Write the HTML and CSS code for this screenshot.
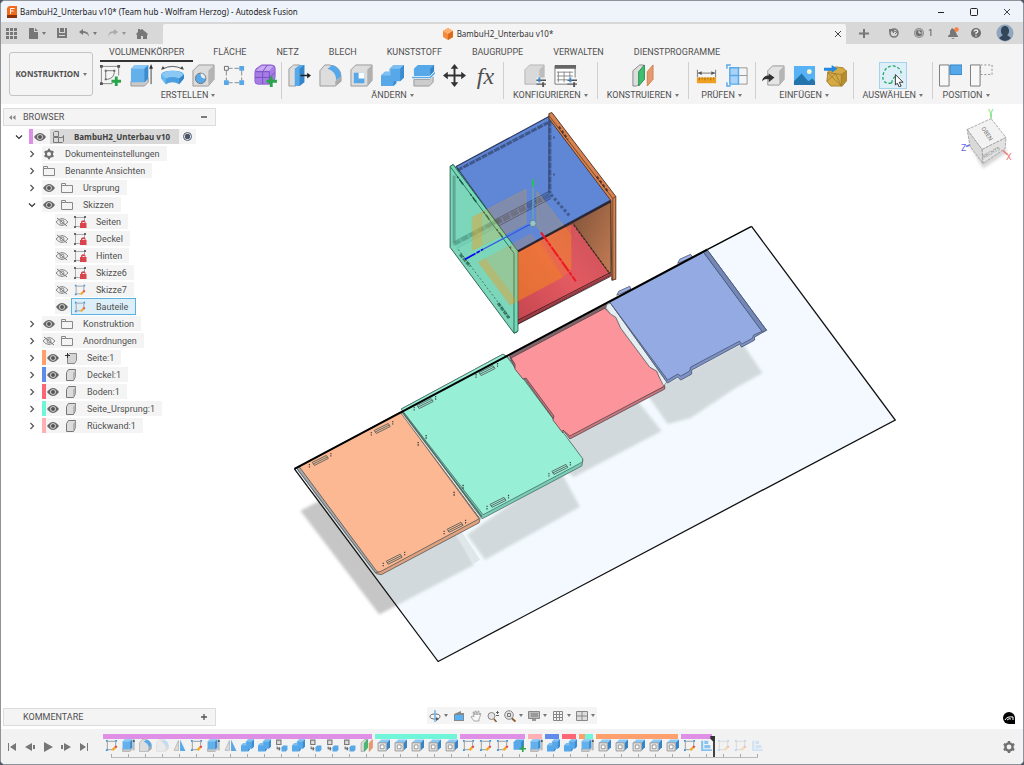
FILE: index.html
```html
<!doctype html>
<html lang="de">
  <head>
    <meta charset="UTF-8" />
    <meta name="viewport" content="width=device-width, initial-scale=1.0" />
    <title>BambuH2_Unterbau v10* - Autodesk Fusion</title>
    <link rel="stylesheet" href="styles.css">
  </head>
  <body>
    <!-- icon set -->
    <svg class="sprite" aria-hidden="true">
      <symbol id="i-grid" viewBox="0 0 12 12"><path fill="#777" d="M1 1h3v3H1zM5 1h3v3H5zM9 1h3v3H9zM1 5h3v3H1zM5 5h3v3H5zM9 5h3v3H9zM1 9h3v3H1zM5 9h3v3H5zM9 9h3v3H9z"/></symbol>
      <symbol id="i-file" viewBox="0 0 12 12"><path fill="#777" d="M2 1h5v4h4v7H2zM8 1l3 3H8z"/></symbol>
      <symbol id="i-save" viewBox="0 0 12 12"><path fill="#777" d="M1 1h10v10H1z"/><path fill="#d8d8d8" d="M3 1h1v4h4V1h1v5H3zM3 8h6v1H3z"/></symbol>
      <symbol id="i-undo" viewBox="0 0 12 12"><path fill="#777" d="M1 5l4-3v2q6 0 6 6-1-4-6-4v2z"/></symbol>
      <symbol id="i-redo" viewBox="0 0 12 12"><path fill="#999" d="M11 5L7 2v2Q1 4 1 10q1-4 6-4v2z"/></symbol>
      <symbol id="i-home" viewBox="0 0 12 12"><path fill="#777" d="M6 2l6 5-1 1v4H7V9H5v3H1V8L0 7l2-2V2h2v1z"/></symbol>
      <symbol id="i-x" viewBox="0 0 12 12"><path stroke="#444" d="M3 3l6 6M9 3l-6 6"/></symbol>
      <symbol id="i-plus" viewBox="0 0 12 12"><path stroke="#777" stroke-width="2" d="M6 2v9M1 6.500h10"/></symbol>
      <symbol id="i-ext" viewBox="0 0 12 12"><circle cx="6" cy="6" r="4" fill="none" stroke="#777" stroke-width="1.600"/><path fill="#777" d="M1 2h5v4H5L4 4 1 5z"/><path fill="none" stroke="#777" d="M6 4l3 1-2 2"/></symbol>
      <symbol id="i-clock" viewBox="0 0 12 12"><circle cx="6" cy="6" r="5" fill="#888"/><circle cx="6" cy="6" r="3.800" fill="#6e6e6e" stroke="#ccc" stroke-width=".8"/><path fill="none" stroke="#eee" d="M6 3.500V6h2.500"/></symbol>
      <symbol id="i-bell" viewBox="0 0 12 12"><path fill="#777" d="M5 1l3 2 2 5 1 1v1H1V9l2-2V4zM4 11h4l-2 1z"/><circle cx="9.500" cy="2.500" r="2.200" fill="#ff7f3f"/></symbol>
      <symbol id="i-help" viewBox="0 0 12 12"><circle cx="6" cy="6" r="5" fill="#6e6e6e"/><path fill="none" stroke="#eee" stroke-width="1.300" d="M4.200 4.500q0-1.500 1.800-1.500t1.800 1.500Q7.800 5.500 6 6v1.200M6 8.200v1.200"/></symbol>
      <symbol id="i-avatar" viewBox="0 0 18 18"><circle cx="9" cy="9" r="8.500" fill="#8fa6be"/><path fill="#33465a" d="M9 2c5 0 5 8 2 9l4 3q-6 6-12 0l4-3C4 10 4 2 9 2z"/></symbol>

      <!-- modelling tools -->
      <symbol id="i-sketchnew" viewBox="0 0 24 24"><path fill="none" stroke="#888" d="M2 2.500h18M2.500 3v18M2 20.500h12M20.500 3v9"/><path fill="#555" d="M1 1h3v3H1zM19 1h3v3h-3zM1 19h3v3H1z"/><path fill="none" stroke="#777" d="M7 7h9v2q-1 6-7 7H7z"/><path fill="#666" d="M6 6h2v2H6zM15 6h2v2h-2zM6 15h2v2H6z"/><path stroke="#2aa54a" stroke-width="3" d="M18 13v10M13 18h10"/></symbol>
      <symbol id="i-extrude" viewBox="0 0 24 24"><path fill="#c9c9c9" stroke="#999" d="M1 18h14l4-3v4l-4 4H1z"/><path fill="#63b0ea" d="M1 5l4-4h14v14l-4 4H1z"/><path fill="#8bc8f5" d="M1 5l4-4h14l-4 4z"/><path fill="#3d8cd0" d="M15 5l4-4v14l-4 4z"/><path stroke="#444" d="M22 3v18"/><path fill="#333" d="M22 0l2 5h-4z"/></symbol>
      <symbol id="i-revolve" viewBox="0 0 24 24"><path fill="#4d9fe0" d="M0 11q1-4 12-4t12 4v3l-5 7q-7-4-14 0l-5-7z"/><path fill="#8bc8f5" d="M0 11q4-4 12-4t12 4l-5 4q-7-3-14 0z"/><path fill="#3585c8" d="M19 15l5-4v4l-5 6z"/><path fill="#6bb8f0" d="M0 11l5 4v6l-5-6z"/><path fill="none" stroke="#555" d="M2 5q10-5 20 0"/><path fill="#444" d="M0 6l2-4 2 3zM24 6l-2-4-2 3z"/></symbol>
      <symbol id="i-hole" viewBox="0 0 24 24"><path fill="#dcdcdc" stroke="#999" d="M1 7l6-6h16v15l-6 7H1z"/><path fill="#b4b4b4" d="M17 7l6-6v15l-6 6z"/><circle cx="9" cy="15" r="5.500" fill="#57a8e8" stroke="#777"/><path fill="#eee" d="M9 10a5 5 0 0 1 5 5q-5 1-5-5z"/></symbol>
      <symbol id="i-pattern" viewBox="0 0 24 24"><path stroke="#888" stroke-dasharray="5 2" d="M5 4.500h14M5 19.500h14M3.500 7v10M19.500 7v10" fill="none"/><path fill="#fff" stroke="#666" d="M1.500 2.500h4v4h-4z"/><path fill="#57a8e8" d="M17 2h5v5h-5zM1 17h5v5H1zM17 17h5v5h-5z"/></symbol>
      <symbol id="i-form" viewBox="0 0 24 24"><path fill="#a67de6" stroke="#8a5fcc" d="M1 8q0-3 4-5l3-2h10q4 0 4 3v10q0 3-3 5l-3 2H4q-3 0-3-3z"/><path fill="#c8abf5" d="M2 7l6-5h12l-4 5z"/><path stroke="#7a4fc0" fill="none" d="M2 8h14v13M9 8v13M1 14h15l6-5M9 8l5-7"/><path stroke="#2aa54a" stroke-width="3" d="M18 13v11M13 18h11"/></symbol>
      <symbol id="i-press" viewBox="0 0 24 24"><path fill="#ddd" stroke="#999" d="M1 5l5-4h6v18l-4 4H1z"/><path fill="#57a8e8" d="M7 5l5-4h5v18l-5 4H7z"/><path fill="#3585c8" d="M12 5l5-4v18l-5 4z"/><path stroke="#222" stroke-width="1.500" d="M13 12h8"/><path fill="#222" d="M20 9l4 3-4 3z"/></symbol>
      <symbol id="i-fillet" viewBox="0 0 24 24"><path fill="#ddd" stroke="#999" d="M1 7l5-6h5q12 2 12 12v5l-6 5H1z"/><path fill="#57a8e8" d="M9 5l5-4q9 3 9 12l-5 4q0-9-9-12z"/><path fill="#aaa" d="M17 18l6-5v5l-6 5z"/></symbol>
      <symbol id="i-shell" viewBox="0 0 24 24"><path fill="#ddd" stroke="#999" d="M1 6l5-5h17v16l-5 6H1z"/><path fill="#b0b0b0" d="M18 6l5-5v16l-5 6z"/><path fill="#57a8e8" d="M4 9h11v11H4z"/><path fill="#fff" d="M9 9h6v6H9z"/></symbol>
      <symbol id="i-combine" viewBox="0 0 24 24"><path fill="#57a8e8" d="M0 12l4-4h5V5l4-4h11v13l-4 4h-4v2l-3 3H0z"/><path fill="#7fc0f2" d="M0 12l4-4h5V5l4-4h11l-4 4H10v7z"/><path fill="#3d8cd0" d="M20 5l4-4v13l-4 4h-4v2l-3 3v-5h7z"/></symbol>
      <symbol id="i-split" viewBox="0 0 24 24"><path fill="#57a8e8" d="M2 5l4-4h17v8l-4 4H2z"/><path fill="#3585c8" d="M19 5l4-4v8l-4 4z"/><path fill="#ccc" stroke="#999" d="M2 16h16l4-3v6l-4 4H2z"/><path fill="none" stroke="#fff" stroke-width="3" d="M0 14h19l5-5"/><path fill="none" stroke="#57a8e8" stroke-width="1.500" d="M0 14h19l5-5"/></symbol>
      <symbol id="i-move" viewBox="0 0 24 24"><path stroke="#333" stroke-width="2" d="M12 3v18M3 12h18"/><path fill="#333" d="M12 0l4 5H8zM12 24l4-5H8zM0 12l5-4v8zM24 12l-5-4v8z"/></symbol>
      <symbol id="i-config" viewBox="0 0 24 24"><path fill="#d9d9d9" stroke="#b5b5b5" d="M2 6l5-5h15v15l-5 5H2z"/><path fill="#bdbdbd" d="M17 6l5-5v15l-5 5z"/><path fill="#f4f4f4" opacity=".8" d="M14 14h10v10H14z"/><path stroke="#555" stroke-width="1.500" d="M14 17h10M14 21h10"/><path stroke="#2f8fe0" stroke-width="2" d="M17 14v5"/><path stroke="#555" stroke-width="2" d="M21 19v5"/></symbol>
      <symbol id="i-table" viewBox="0 0 24 24"><path fill="#fff" stroke="#777" d="M1 2h21v19H1z"/><path fill="#666" d="M1 1h22v4H1z"/><path stroke="#888" fill="none" d="M3 8.500h17M3 12.500h17M3 16.500h11M4.500 8v11M10.500 8v11M16.500 8v6"/><path fill="#f4f4f4" d="M15 14h9v10h-9z"/><path stroke="#555" stroke-width="1.500" d="M14 17h10M14 21h10"/><path stroke="#2f8fe0" stroke-width="2" d="M17 14v5"/><path stroke="#555" stroke-width="2" d="M21 19v5"/></symbol>
      <symbol id="i-plane" viewBox="0 0 24 24"><path fill="#ddd" stroke="#888" d="M2 7l7-6h4v15l-7 7H2z"/><path fill="#3fbf6f" stroke="#2a8f50" d="M8 8l6-7v15l-6 7z"/><path fill="#e79a6c" stroke="#d08050" d="M17 8l6-7v15l-6 7z"/></symbol>
      <symbol id="i-ruler" viewBox="0 0 24 24"><path stroke="#777" d="M2.500 6v8M21.500 6v8M3 9.500h18"/><path fill="#555" d="M3 9.500l4-2v4zM21 9.500l-4-2v4z"/><path fill="#f0a020" d="M2 14h20v6H2z"/><path stroke="#a06c08" d="M4.500 14v3M7.500 14v2M10.500 14v3M13.500 14v2M16.500 14v3M19.500 14v2"/></symbol>
      <symbol id="i-inspect" viewBox="0 0 24 24"><path fill="#a9d4f8" d="M4 4h9v17H4z"/><path fill="none" stroke="#999" d="M13 4h9v17h-9M13 12h9"/><path fill="none" stroke="#57a8e8" stroke-width="1.500" d="M4 4h9v17H4zM4 12h9M1 5V1h4M1 19v4h4"/></symbol>
      <symbol id="i-insert" viewBox="0 0 24 24"><path fill="#e4e4e4" stroke="#999" d="M6 7l5-5h12v14l-5 6H6z"/><path fill="#b5b5b5" d="M18 7l5-5v14l-5 6z"/><path fill="#333" d="M7 10l6 4-6 5v-3q-4-1-7 2 1-6 7-6z"/></symbol>
      <symbol id="i-image" viewBox="0 0 24 24"><path fill="#57b2f5" d="M1 2h22v20H1z"/><path fill="#2474ad" d="M1 18l8-8 7 8 4-3 3 3v4H1z"/><circle cx="17" cy="8" r="2.500" fill="#fffbd0"/></symbol>
      <symbol id="i-mesh" viewBox="0 0 24 24"><path fill="#d5aa45" stroke="#a88230" d="M4 8l8-5 8 1 4 4v9l-5 6H7l-4-5z"/><path fill="#b68c30" d="M18 11l6-4v10l-6 6z"/><path fill="none" stroke="#9c7a2c" stroke-width=".8" d="M4 9l14 2 6-4M3 18l9-8 6 13M18 11v12M4 9l14 14"/><path fill="#2388e0" d="M0 4h8V1l6 4-6 4V7H0z"/></symbol>
      <symbol id="i-select" viewBox="0 0 24 24"><path fill="none" stroke="#2aa860" stroke-width="1.400" stroke-dasharray="3 2" d="M11 20q-10 1-9-8Q4 2 13 2q9 2 8 10M11 20q1-5 4-7"/><path fill="#fff" stroke="#333" d="M15 11l8 8h-4l2 4-2 1-2-4-2 2z"/></symbol>
      <symbol id="i-pos1" viewBox="0 0 24 24"><path fill="#f8f8f8" stroke="#777" d="M.5 1h10v22H.5z"/><path fill="#57a8e8" stroke="#3585c8" d="M11.500 1H24v10H11.500z"/></symbol>
      <symbol id="i-pos2" viewBox="0 0 24 24"><path fill="#f8f8f8" stroke="#777" d="M.5 1h10v22H.5z"/><path fill="none" stroke="#888" stroke-dasharray="2 2" d="M11 1h12v10H11z"/></symbol>

      <!-- browser tree -->
      <symbol id="i-right" viewBox="0 0 12 12"><path fill="none" stroke="#555" stroke-width="1.200" d="M4.500 3l3 3-3 3"/></symbol>
      <symbol id="i-down" viewBox="0 0 12 12"><path fill="none" stroke="#333" stroke-width="1.200" d="M3 4.500l3 3 3-3"/></symbol>
      <symbol id="i-eye" viewBox="0 0 14 12"><path fill="#666" d="M1 6q6-8 12 0-6 8-12 0z"/><circle cx="7" cy="6" r="2.800" fill="#e4e4e4"/><circle cx="7" cy="6" r="2" fill="#555"/></symbol>
      <symbol id="i-hidden" viewBox="0 0 14 12"><path fill="none" stroke="#888" d="M1 6q6-7 12 0-6 7-12 0z"/><circle cx="7" cy="6" r="2" fill="none" stroke="#888"/><path stroke="#777" d="M2 2l10 8"/></symbol>
      <symbol id="i-gear" viewBox="0 0 14 14"><circle cx="7" cy="7" r="3.600" fill="none" stroke="#707070" stroke-width="2.400"/><path stroke="#707070" stroke-width="2.400" d="M7 1v2M7 11v2M1.800 4l1.700 1M10.500 9l1.700 1M1.800 10l1.700-1M10.500 5l1.700-1"/></symbol>
      <symbol id="i-folder" viewBox="0 0 14 12"><path fill="none" stroke="#888" d="M1.500 10.500v-9h4v2h7v7zM1.500 3.500h4"/></symbol>
      <symbol id="i-assembly" viewBox="0 0 14 12"><path fill="none" stroke="#777" d="M2.500 1.500l1-1h4v5h-5zM2.500 6.500h5v5h-5zM7.500 6.500h4l1-2v6l-1 1h-4z"/></symbol>
      <symbol id="i-lock" viewBox="0 0 14 12"><path fill="none" stroke="#aaa" d="M3 1.500h8M2.500 2v8M3 10.500h4M11.500 2v3"/><path fill="#666" d="M1 0h2v2H1zM11 0h2v2h-2zM1 10h2v2H1z"/><path fill="#d9454c" d="M8 7V5.500q2.500-2.500 4.500 0V7h1v5H7V7z"/><path fill="#f4f4f4" d="M9.500 6h2v1h-2z"/></symbol>
      <symbol id="i-sketch" viewBox="0 0 14 14"><path fill="none" stroke="#999" d="M3 2.500h8M2.500 3v9M3 11.500h5M11.500 3v4"/><path fill="#3a93dd" d="M1 1h2v2H1zM11 1h2v2h-2zM1 11h2v2H1z"/><path stroke="#f5a623" stroke-width="2.400" d="M8 12l3-3"/><path stroke="#d9454c" stroke-width="2.400" d="M11 9l1.500-1.500"/></symbol>
      <symbol id="i-body" viewBox="0 0 14 12"><path fill="#dcdcdc" stroke="#777" d="M2.500 3.500l2-3h7v7l-2 4h-7z"/><path fill="#b4b4b4" d="M9 4l2.500-3v6.500L9 11z"/></symbol>
      <symbol id="i-joint" viewBox="0 0 14 12"><path fill="#d4d4d4" stroke="#888" d="M3.500 3.500l2-2h7v7l-2 3h-7z"/><path stroke="#333" fill="none" d="M1 3.500h5M3.500 1v5"/></symbol>

      <!-- timeline features -->
      <symbol id="i-mirror" viewBox="0 0 24 24"><path fill="#ddd" stroke="#999" d="M10 3v18H2z"/><path fill="#57a8e8" d="M13 1v21h10z"/></symbol>
      <symbol id="i-copy" viewBox="0 0 24 24"><path fill="#ddd" stroke="#777" stroke-width="2" d="M3 2h8v8H3z"/><path fill="#57a8e8" d="M12 15l3-3h8v8l-3 3h-8z"/><path fill="none" stroke="#666" stroke-width="2" d="M4 14v4h5M7 15l2 3-2 3"/></symbol>
      <symbol id="i-offset" viewBox="0 0 24 24"><path fill="#8bc8f5" d="M8 1h16l-6 6H2z"/><path fill="#3585c8" d="M18 7l6-6v14l-6 6z"/><path fill="#e8e8e8" stroke="#888" stroke-width="1.500" d="M2 7h15v15H2z"/><path fill="#fff" stroke="#888" stroke-width="1.500" d="M6 11h7v7H6z"/></symbol>
      <symbol id="i-align" viewBox="0 0 24 24"><path fill="#86c3f2" d="M2 3h4v16H2zM8 3h7v6H8zM8 11h11v6H8zM2 19h20v3H2z"/></symbol>
      <symbol id="i-boxplus" viewBox="0 0 24 24"><path fill="#57a8e8" d="M1 6l5-5h14v14l-5 5H1z"/><path fill="#3585c8" d="M15 6l5-5v14l-5 5z"/><path stroke="#2aa54a" stroke-width="3" d="M18 12v12M12 18h12"/></symbol>
      <symbol id="i-first" viewBox="0 0 12 12"><path fill="#777" d="M2 2h1v8H2zM10 2v8L4 6z"/></symbol>
      <symbol id="i-prev" viewBox="0 0 12 12"><path fill="#777" d="M8 2v8L1 6zM9 4h2v4H9z"/></symbol>
      <symbol id="i-play" viewBox="0 0 12 12"><path fill="#777" d="M2 1l9 5-9 5z"/></symbol>
      <symbol id="i-next" viewBox="0 0 12 12"><path fill="#777" d="M4 2v8l7-4zM1 4h2v4H1z"/></symbol>
      <symbol id="i-last" viewBox="0 0 12 12"><path fill="#777" d="M9 2h1v8H9zM2 2v8l6-4z"/></symbol>

      <!-- view navigation -->
      <symbol id="i-orbit" viewBox="0 0 12 12"><ellipse cx="6" cy="6.500" rx="5" ry="2.500" fill="none" stroke="#666"/><path stroke="#6bb5ee" stroke-width="1.500" d="M6 0v12"/><path fill="#555" d="M7 7l3 2-3 2z"/></symbol>
      <symbol id="i-look" viewBox="0 0 12 12"><path fill="#888" d="M1 4l7-3v2h3v8H1z"/><path fill="#57b2f5" d="M2 5h8v5H2z"/></symbol>
      <symbol id="i-hand" viewBox="0 0 12 12"><path fill="#f8f8f8" stroke="#999" stroke-width=".8" d="M4 11L1 7l1-1 2 1-1-5h1l1 3V1h1l1 4 1-4h1v4l1-2 1 1-2 5v2z"/></symbol>
      <symbol id="i-zoom" viewBox="0 0 12 12"><circle cx="4.500" cy="6" r="3.500" fill="#e4e4e4" stroke="#888"/><path stroke="#8a5a2b" stroke-width="1.500" d="M7 9l2.500 3"/><path stroke="#666" d="M9 2.500h3M10.500 1v3M9 5.500h3"/></symbol>
      <symbol id="i-fit" viewBox="0 0 12 12"><circle cx="5" cy="5" r="4.300" fill="#e4e4e4" stroke="#888"/><path fill="none" stroke="#777" d="M3.500 3.500h3v3h-3z"/><path stroke="#8a5a2b" stroke-width="1.800" d="M8 8.500l3.500 3"/></symbol>
      <symbol id="i-display" viewBox="0 0 12 12"><path fill="#bbb" stroke="#888" d="M.5 1.500h11v7H.5z"/><path fill="#999" d="M3 3h7v4H3zM4 9h4v2H4z"/></symbol>
      <symbol id="i-raster" viewBox="0 0 12 12"><path fill="none" stroke="#888" d="M1.500 1.500h9v9h-9zM4.500 1v10M7.500 1v10M1 4.500h10M1 7.500h10"/></symbol>
      <symbol id="i-views" viewBox="0 0 12 12"><path fill="#ddd" stroke="#888" d="M.5 1.500h11v9H.5zM6 2v9M0 6h12"/></symbol>
      <symbol id="slot" viewBox="-14 -9 28 18" overflow="visible"><path fill="none" stroke="#55605c" stroke-width=".9" d="M-8 2.500L6-4.500 8-1.500-6 5.500zM-7 4L7-3"/><path stroke="#444" stroke-width="1.200" stroke-dasharray="1.300 1" d="M-11 4v4M10.500-7v4"/></symbol>
    </svg>

    <div class="window">
      <header class="titlebar">
        <svg class="app-logo" viewBox="0 0 10 12"><path fill="#f26b1d" d="M0 2l2-2h8v12H0z"/><path fill="#8c3208" d="M0 9h10v3H0z"/><path fill="none" stroke="#fff" d="M3.500 8V2.500h4M3.500 5h3"/></svg>
        <h1 class="window-title">BambuH2_Unterbau v10* (Team hub - Wolfram Herzog) - Autodesk Fusion</h1>
        <div class="caption-buttons">
          <button aria-label="Minimieren"><svg class="icon-12" viewBox="0 0 12 12"><path stroke="#222" d="M3 6.500h6"/></svg></button>
          <button aria-label="Maximieren"><svg class="icon-12" viewBox="0 0 12 12"><rect x="2.500" y="2.500" width="7" height="7" rx="1" fill="none" stroke="#222"/></svg></button>
          <button aria-label="Schließen"><svg class="icon-12"><use href="#i-x"/></svg></button>
        </div>
      </header>

      <div class="tabbar">
        <div class="quick-access">
          <button aria-label="Datengruppe"><svg class="icon-12"><use href="#i-grid"/></svg></button>
          <button aria-label="Datei" class="has-menu"><svg class="icon-12"><use href="#i-file"/></svg></button>
          <button aria-label="Speichern"><svg class="icon-12"><use href="#i-save"/></svg></button>
          <button aria-label="Rückgängig" class="has-menu"><svg class="icon-12"><use href="#i-undo"/></svg></button>
          <button aria-label="Wiederholen" class="has-menu dim"><svg class="icon-12"><use href="#i-redo"/></svg></button>
          <button aria-label="Startseite"><svg class="icon-12"><use href="#i-home"/></svg></button>
        </div>
        <div class="doc-tab">
          <span class="doc-name"><svg class="icon-12" viewBox="0 0 12 12"><path fill="#f58a3c" d="M6 0l5 3v6l-5 3-5-3V3z"/><path fill="#ffb070" d="M6 0l5 3-5 3-5-3z"/><path fill="#d96a1c" d="M6 6l5-3v6l-5 3z"/></svg>BambuH2_Unterbau v10*</span>
          <button aria-label="Tab schließen"><svg class="icon-12"><use href="#i-x"/></svg></button>
        </div>
        <div class="tab-tools">
          <button class="wide" aria-label="Neuer Tab"><svg class="icon-12"><use href="#i-plus"/></svg></button>
          <button aria-label="Erweiterungen"><svg class="icon-12"><use href="#i-ext"/></svg></button>
          <button class="wide"  aria-label="Auftragsstatus"><svg class="icon-12"><use href="#i-clock"/></svg>1</button>
          <button aria-label="Benachrichtigungen"><svg class="icon-12"><use href="#i-bell"/></svg></button>
          <button aria-label="Hilfe"><svg class="icon-12"><use href="#i-help"/></svg></button>
          <button class="wide" aria-label="Profil"><svg class="avatar"><use href="#i-avatar"/></svg></button>
        </div>
      </div>

      <div class="ribbon">
        <button class="workspace-switch has-menu">KONSTRUKTION</button>
        <div class="ribbon-main">
          <nav class="ribbon-tabs">
            <button class="active">VOLUMENKÖRPER</button>
            <button>FLÄCHE</button>
            <button>NETZ</button>
            <button>BLECH</button>
            <button>KUNSTSTOFF</button>
            <button>BAUGRUPPE</button>
            <button>VERWALTEN</button>
            <button>DIENSTPROGRAMME</button>
          </nav>
          <div class="ribbon-groups">
            <section class="group">
              <div class="tools">
                <button aria-label="Skizze erstellen"><svg><use href="#i-sketchnew"/></svg></button>
                <button aria-label="Extrusion"><svg><use href="#i-extrude"/></svg></button>
                <button aria-label="Drehen"><svg><use href="#i-revolve"/></svg></button>
                <button aria-label="Bohrung"><svg><use href="#i-hole"/></svg></button>
                <button aria-label="Muster"><svg><use href="#i-pattern"/></svg></button>
                <button aria-label="Form erstellen"><svg><use href="#i-form"/></svg></button>
              </div>
              <button class="group-label has-menu">ERSTELLEN</button>
            </section>
            <section class="group">
              <div class="tools">
                <button aria-label="Drücken/Ziehen"><svg><use href="#i-press"/></svg></button>
                <button aria-label="Abrunden"><svg><use href="#i-fillet"/></svg></button>
                <button aria-label="Schale"><svg><use href="#i-shell"/></svg></button>
                <button aria-label="Kombinieren"><svg><use href="#i-combine"/></svg></button>
                <button aria-label="Teilen"><svg><use href="#i-split"/></svg></button>
                <button aria-label="Verschieben"><svg><use href="#i-move"/></svg></button>
                <button class="fx">fx</button>
              </div>
              <button class="group-label has-menu">ÄNDERN</button>
            </section>
            <section class="group">
              <div class="tools">
                <button aria-label="Konfiguration"><svg><use href="#i-config"/></svg></button>
                <button aria-label="Tabelle"><svg><use href="#i-table"/></svg></button>
              </div>
              <button class="group-label has-menu">KONFIGURIEREN</button>
            </section>
            <section class="group">
              <div class="tools">
                <button aria-label="Ebene"><svg><use href="#i-plane"/></svg></button>
              </div>
              <button class="group-label has-menu">KONSTRUIEREN</button>
            </section>
            <section class="group">
              <div class="tools">
                <button aria-label="Messen"><svg><use href="#i-ruler"/></svg></button>
                <button aria-label="Kollision"><svg><use href="#i-inspect"/></svg></button>
              </div>
              <button class="group-label has-menu">PRÜFEN</button>
            </section>
            <section class="group">
              <div class="tools">
                <button aria-label="Ableiten"><svg><use href="#i-insert"/></svg></button>
                <button aria-label="Ansichtsbereich"><svg><use href="#i-image"/></svg></button>
                <button aria-label="Netz einfügen"><svg><use href="#i-mesh"/></svg></button>
              </div>
              <button class="group-label has-menu">EINFÜGEN</button>
            </section>
            <section class="group">
              <div class="tools">
                <button class="selected" aria-label="Auswählen"><svg><use href="#i-select"/></svg></button>
              </div>
              <button class="group-label has-menu">AUSWÄHLEN</button>
            </section>
            <section class="group">
              <div class="tools">
                <button aria-label="Position erfassen"><svg><use href="#i-pos1"/></svg></button>
                <button aria-label="Zurücksetzen"><svg><use href="#i-pos2"/></svg></button>
              </div>
              <button class="group-label has-menu">POSITION</button>
            </section>
          </div>
        </div>
      </div>

      <main class="workspace">
        <svg class="viewport" viewBox="0 104 1024 625">
          <defs>
            <clipPath id="sheet-clip"><path d="M294 469L752 226 896 420 438 662z"/></clipPath>
            <filter id="soft"><feGaussianBlur stdDeviation="1.500"/></filter>
            <linearGradient id="floor" x1="0" y1="1" x2="1" y2="0"><stop offset="0" stop-color="#c5454e"/><stop offset=".5" stop-color="#e35a62"/><stop offset="1" stop-color="#c85058"/></linearGradient>
            <linearGradient id="wall" x1="0" y1="0" x2="1" y2="1"><stop offset="0" stop-color="#7d5238"/><stop offset="1" stop-color="#c47c54"/></linearGradient>
          </defs>

          <!-- sheet with shadows -->
          <path fill="#c6c6c6" filter="url(#soft)" d="M300 511L325 498 474 565 379 615z"/>
          <path fill="#f3f9fe" d="M294 469L752 226 896 420 438 662z"/>
          <g clip-path="url(#sheet-clip)">
            <g fill="#d2d9dc" filter="url(#soft)">
              <path d="M300 511L330 460 450 520 474 565 379 615z"/>
              <path d="M467 535L485 560 580 507 560 470z"/>
              <path d="M565 470L574 477 662 431 637 400 570 435z"/>
              <path d="M647 394L668 424 691 418 736 388 763 373 742 342z"/>
            </g>
            <path stroke="#e0e7ea" stroke-width="7" d="M455 528L477 562"/>
          </g>
          <path fill="none" stroke="#111" stroke-width="1.300" d="M752 226L896 420 438 662 294 469"/>

          <!-- orange side -->
          <g stroke="#555" stroke-width=".8" stroke-linejoin="round">
            <path fill="#e0a27e" d="M296 468L401 412 480 519 479 523 381 575 376 574z"/>
            <path fill="#a4a8aa" d="M296 468l4-1 79 105-4 1z"/>
            <path fill="#fbb892" d="M299 467L400 412 479 519 380 572q-3 1-4-1z"/>
            <path stroke="#eee" stroke-width="1.500" d="M402 413L481 518"/>
          </g>
          <!-- teal side -->
          <g stroke="#4c6a62" stroke-width=".8" stroke-linejoin="round">
            <path fill="#78cfb8" d="M401 409L503 354 508 357 583 460 582 466 482 519z"/>
            <path fill="#97efd6" d="M401 409L503 354 508 358 583 459q0 3-2 4L483 515z"/>
            <path fill="none" stroke-width="1.300" d="M402 412L482 517"/>
          </g>
          <!-- red floor -->
          <g stroke="#5b4346" stroke-width=".8" stroke-linejoin="round">
            <path fill="#7d656a" d="M509 355L607 303 609 308 512 361z"/>
            <path fill="#c87880" d="M510 357L515 368 525 379 553 418 563 430 570 439 665 389 665 386 570 434z"/>
            <path fill="#fc959b" d="M511 358L605 308 611 314 616 317 621 328 650 367 657 371 660 378 665 386 570 436 563 430 563 433 553 420 554 416 526 378 523 379 515 369 515 364z"/>
          </g>
          <path fill="#e7eef1" stroke="#6c7073" stroke-width=".8" d="M607 304L611 303 667 382 664 386 660 378 657 371 650 367 621 328 616 317 611 314 606 308z"/>
          <!-- blue top -->
          <g stroke="#49536c" stroke-width=".8" stroke-linejoin="round">
            <path fill="#9db3e8" d="M678 263l2-4 11-5 2 3zM617 295l2-4 11-5 1 3z"/>
            <path fill="#7c92c8" d="M610 302L708 250 767 330 755 337 755 340 742 347 740 344 692 370 692 374 681 380 678 377 668 383z"/>
            <path fill="#93abe2" d="M610 302L704 252 763 331 754 335 753 338 742 344 740 341 691 367 690 371 681 376 678 374 668 380z"/>
            <path fill="#7388b8" d="M704 252L708 250 767 330 763 332z"/>
          </g>
          <path stroke="#000" stroke-width="2" d="M294 469L708 249"/>
          <path stroke="#000" stroke-width="1.400" d="M708 249L752 226"/>

          <!-- joinery slots -->
          <use href="#slot" x="306" y="451" width="28" height="18"/>
          <use href="#slot" x="368" y="419" width="28" height="18"/>
          <use href="#slot" x="380" y="550" width="28" height="18"/>
          <use href="#slot" x="441" y="518" width="28" height="18"/>
          <use href="#slot" x="411" y="394" width="28" height="18"/>
          <use href="#slot" x="473" y="361" width="28" height="18"/>
          <use href="#slot" x="484" y="493" width="28" height="18"/>
          <use href="#slot" x="546" y="460" width="28" height="18"/>
          <path stroke="#444" stroke-width="1.400" stroke-dasharray="1.400 1" d="M426 435v4M418 442v4M463 485v4M454 492v4"/>

          <!-- assembled cabinet -->
          <g stroke-linejoin="round">
            <path fill="url(#floor)" stroke="#50282a" d="M517 250L573 223 611 275 517 324z"/>
            <path fill="url(#wall)" stroke="#60402c" d="M573 222L611 199 611 275z"/>
            <path fill="#5f87d6" stroke="#2d3a5e" stroke-width="1.200" d="M456 166L549 116 612 199 517 251z"/>
            <path fill="#d8824f" stroke="#4a3020" stroke-width=".9" d="M549 113L552 112 616 196 616 279 612 280 611 200 549 118z"/>
            <path fill="none" stroke="#4a3020" stroke-width=".7" d="M549 115L613 198 616 196M613 198V280"/>
            <g fill="none" stroke="#25304e">
              <path stroke-width="3" stroke-dasharray="6 1" opacity=".55" d="M457 170L548 122"/>
              <path stroke-width="3" stroke-dasharray="6 1" opacity=".5" d="M550 120V193"/>
              <path stroke-width="5" stroke-dasharray="8 1" opacity=".4" d="M455 244L551 194"/>
              <path stroke-width="3" stroke-dasharray="3 2" opacity=".5" d="M551 194L570 216"/>
              <path stroke-width=".8" opacity=".8" d="M456 240L549 191M456 248L551 198M549 118V192"/>
              <path stroke-width="1.200" stroke-dasharray="2 3" opacity=".8" d="M554 136v3M554 173v3"/>
            </g>
            <path fill="#65cfae" stroke="#1f5a48" stroke-width=".9" fill-opacity=".85" d="M450 166L453 164 517 251 517 332 514 333 450 247z"/>
            <path fill="#74d9b9" stroke="#1f5a48" stroke-width=".8" d="M450 166L453 164 518 251 518 331 514 333 514 253z"/>
            <g fill="none" stroke="#164237">
              <path stroke-width="3" opacity=".3" d="M454 175V242"/>
              <path stroke-width="1.500" stroke-dasharray="2 2 6 12" opacity=".8" d="M457 176L511 248"/>
              <path stroke-width="1" stroke-dasharray="2 2" opacity=".6" d="M458 249L510 318"/>
              <path stroke-width="3" stroke-dasharray="4 1" opacity=".6" d="M460 254l10 12M498 303l11 15"/>
              <path stroke-width="4" stroke-dasharray="8 1" opacity=".25" d="M453 244L500 219"/>
            </g>
            <g fill="none" stroke="#2b1a12">
              <path stroke-width="2" stroke-dasharray="3 2" opacity=".7" d="M559 126l9 13M597 176l11 15"/>
              <path stroke-width="1.200" stroke-dasharray="2 2" opacity=".7" d="M574 225L610 273"/>
            </g>
            <g fill="#f5a01f" fill-opacity=".22" stroke="#e8a020" stroke-opacity=".3">
              <path d="M472 217L526 189 526 223 472 250z"/>
              <path d="M537 191L571 235 571 269 537 226z"/>
            </g>
            <path fill="#f5a01f" fill-opacity=".3" d="M473 217l9-5v33l-9 5z"/>
            <path fill="#f58a20" fill-opacity=".2" d="M478 262L531 233 563 277 510 305z"/>
            <path fill="#f5a020" fill-opacity=".3" d="M478 262l7-4 32 43v1l-7 3z"/>
            <path fill="#f58a20" fill-opacity=".45" d="M518 251L541 239 563 277 518 301z"/>
            <path fill="#f58a20" fill-opacity=".3" d="M552 233L571 223V269L563 277 541 239z"/>
            <path stroke="#2b2430" stroke-width="2" d="M518 251L611 201"/>
            <path stroke="#9b3a42" stroke-width="2" d="M518 322L611 274"/>
            <path stroke="#2b1418" stroke-width=".8" d="M518 324L611 276M518 320L611 272"/>
          </g>
          <path stroke="#6ea0b0" stroke-width="1.500" d="M533 187V220"/>
          <path stroke="#15d52c" stroke-width="1.500" d="M533 179V186"/>
          <path stroke="#3457e0" stroke-width="1.200" d="M530 224L483 249"/>
          <path stroke="#0808f0" stroke-width="1.800" stroke-dasharray="12 1 4 1" d="M465 259L483 249"/>
          <path stroke="#f01820" stroke-width="2" stroke-dasharray="12 1 4 1" d="M541 232L576 281"/>
          <circle cx="533" cy="223" r="3.200" fill="#9fc0ce" stroke="#5a8898"/>

          <!-- view cube -->
          <g class="viewcube">
            <path fill="#999" opacity=".4" filter="url(#soft)" d="M970 144L984 168 1008 152 1004 142z"/>
            <path stroke="#7de07d" stroke-width="1.500" d="M992 118v-5"/>
            <path stroke="#6a6ae8" stroke-width="1.500" d="M967 146l5-2"/>
            <path stroke="#ee7777" stroke-width="1.500" d="M1004 150l4 4"/>
            <g stroke="#999" stroke-dasharray="3 1" stroke-width=".8">
              <path fill="#f2f2f2" d="M992 118L1007 137 983 149 968 129z"/>
              <path fill="#d9d9d9" d="M968 129L983 149 984 163 971 146z"/>
              <path fill="#e2e2e2" d="M983 149L1007 137 1006 148 984 163z"/>
            </g>
            <text class="cube-face" transform="translate(982 128) rotate(56)">OBEN</text>
            <text class="cube-side" transform="translate(985 158) rotate(-29)">RECHTS</text>
            <text fill="#7de07d" x="989" y="115">Y</text>
            <text fill="#6a6ae8" x="962" y="150">Z</text>
            <text fill="#ee7777" x="1007" y="159">X</text>
          </g>
        </svg>

        <aside class="browser">
          <div class="panel-header">
            <button aria-label="Einklappen"><svg class="icon-12" viewBox="0 0 12 12"><path fill="#888" d="M6 4v5L3 6.500zM9.500 4v5l-3-2.500z"/></svg></button>
            <h2>BROWSER</h2>
            <button aria-label="Minimieren"><svg class="icon-12" viewBox="0 0 12 12"><path stroke="#555" stroke-width="1.500" d="M3 6h6"/></svg></button>
          </div>
          <ul class="tree">
            <li class="level-0"><button class="twisty"><svg class="icon-12"><use href="#i-down"/></svg></button>
              <div class="chip"><i class="mark pink"></i><button class="eye"><svg><use href="#i-eye"/></svg></button><span class="node root"><svg><use href="#i-assembly"/></svg>BambuH2_Unterbau v10</span><input type="radio" name="active" aria-label="Komponente aktivieren" checked></div></li>
            <li class="level-1"><button class="twisty"><svg class="icon-12"><use href="#i-right"/></svg></button>
              <div class="chip"><span class="node flush"><svg><use href="#i-gear"/></svg>Dokumenteinstellungen</span></div></li>
            <li class="level-1"><button class="twisty"><svg class="icon-12"><use href="#i-right"/></svg></button>
              <div class="chip"><span class="node flush"><svg><use href="#i-folder"/></svg>Benannte Ansichten</span></div></li>
            <li class="level-1"><button class="twisty"><svg class="icon-12"><use href="#i-right"/></svg></button>
              <div class="chip"><button class="eye"><svg><use href="#i-eye"/></svg></button><span class="node"><svg><use href="#i-folder"/></svg>Ursprung</span></div></li>
            <li class="level-1"><button class="twisty"><svg class="icon-12"><use href="#i-down"/></svg></button>
              <div class="chip"><button class="eye"><svg><use href="#i-eye"/></svg></button><span class="node"><svg><use href="#i-folder"/></svg>Skizzen</span></div></li>
            <li class="level-2">
              <div class="chip"><button class="eye"><svg><use href="#i-hidden"/></svg></button><span class="node"><svg><use href="#i-lock"/></svg>Seiten</span></div></li>
            <li class="level-2">
              <div class="chip"><button class="eye"><svg><use href="#i-hidden"/></svg></button><span class="node"><svg><use href="#i-lock"/></svg>Deckel</span></div></li>
            <li class="level-2">
              <div class="chip"><button class="eye"><svg><use href="#i-hidden"/></svg></button><span class="node"><svg><use href="#i-lock"/></svg>Hinten</span></div></li>
            <li class="level-2">
              <div class="chip"><button class="eye"><svg><use href="#i-hidden"/></svg></button><span class="node"><svg><use href="#i-lock"/></svg>Skizze6</span></div></li>
            <li class="level-2">
              <div class="chip"><button class="eye"><svg><use href="#i-hidden"/></svg></button><span class="node"><svg><use href="#i-sketch"/></svg>Skizze7</span></div></li>
            <li class="level-2">
              <div class="chip"><button class="eye"><svg><use href="#i-eye"/></svg></button><span class="node current"><svg><use href="#i-sketch"/></svg>Bauteile</span></div></li>
            <li class="level-1"><button class="twisty"><svg class="icon-12"><use href="#i-right"/></svg></button>
              <div class="chip"><button class="eye"><svg><use href="#i-eye"/></svg></button><span class="node"><svg><use href="#i-folder"/></svg>Konstruktion</span></div></li>
            <li class="level-1"><button class="twisty"><svg class="icon-12"><use href="#i-right"/></svg></button>
              <div class="chip"><button class="eye"><svg><use href="#i-hidden"/></svg></button><span class="node"><svg><use href="#i-folder"/></svg>Anordnungen</span></div></li>
            <li class="level-1"><button class="twisty"><svg class="icon-12"><use href="#i-right"/></svg></button>
              <div class="chip"><i class="mark orange"></i><button class="eye"><svg><use href="#i-eye"/></svg></button><span class="node"><svg><use href="#i-joint"/></svg>Seite:1</span></div></li>
            <li class="level-1"><button class="twisty"><svg class="icon-12"><use href="#i-right"/></svg></button>
              <div class="chip"><i class="mark blue"></i><button class="eye"><svg><use href="#i-eye"/></svg></button><span class="node"><svg><use href="#i-body"/></svg>Deckel:1</span></div></li>
            <li class="level-1"><button class="twisty"><svg class="icon-12"><use href="#i-right"/></svg></button>
              <div class="chip"><i class="mark red"></i><button class="eye"><svg><use href="#i-eye"/></svg></button><span class="node"><svg><use href="#i-body"/></svg>Boden:1</span></div></li>
            <li class="level-1"><button class="twisty"><svg class="icon-12"><use href="#i-right"/></svg></button>
              <div class="chip"><i class="mark teal"></i><button class="eye"><svg><use href="#i-eye"/></svg></button><span class="node"><svg><use href="#i-body"/></svg>Seite_Ursprung:1</span></div></li>
            <li class="level-1"><button class="twisty"><svg class="icon-12"><use href="#i-right"/></svg></button>
              <div class="chip"><i class="mark rose"></i><button class="eye"><svg><use href="#i-eye"/></svg></button><span class="node"><svg><use href="#i-body"/></svg>Rückwand:1</span></div></li>
          </ul>
        </aside>

        <div class="comments panel-header">
          <h2>KOMMENTARE</h2>
          <button aria-label="Kommentar hinzufügen"><svg class="icon-12" viewBox="0 0 12 12"><path stroke="#555" stroke-width="1.300" d="M6 3v6M3 6h6"/></svg></button>
        </div>

        <div class="navbar">
          <button class="has-menu" aria-label="Orbit"><svg class="icon-12"><use href="#i-orbit"/></svg></button>
          <button aria-label="Ansehen"><svg class="icon-12"><use href="#i-look"/></svg></button>
          <button aria-label="Pan"><svg class="icon-12"><use href="#i-hand"/></svg></button>
          <button aria-label="Zoom"><svg class="icon-12"><use href="#i-zoom"/></svg></button>
          <button class="has-menu" aria-label="Einpassen"><svg class="icon-12"><use href="#i-fit"/></svg></button>
          <button class="has-menu" aria-label="Anzeige"><svg class="icon-12"><use href="#i-display"/></svg></button>
          <button class="has-menu" aria-label="Raster"><svg class="icon-12"><use href="#i-raster"/></svg></button>
          <button class="has-menu" aria-label="Ansichtsfenster"><svg class="icon-12"><use href="#i-views"/></svg></button>
        </div>

        <button class="assistant" aria-label="Assistent"><svg class="icon-12" viewBox="0 0 12 12"><path d="M6 0a6 6 0 0 1 6 6v6H6A6 6 0 0 1 6 0z"/><path fill="none" stroke="#fff" d="M2 8q2-4 8-3v3M4 8q2-2 4-1"/></svg></button>
      </main>

      <footer class="timeline">
        <div class="player">
          <button aria-label="Anfang"><svg class="icon-12"><use href="#i-first"/></svg></button>
          <button aria-label="Zurück"><svg class="icon-12"><use href="#i-prev"/></svg></button>
          <button aria-label="Abspielen"><svg class="icon-12"><use href="#i-play"/></svg></button>
          <button aria-label="Vor"><svg class="icon-12"><use href="#i-next"/></svg></button>
          <button aria-label="Ende"><svg class="icon-12"><use href="#i-last"/></svg></button>
        </div>
        <div class="track">
          <div class="run pink">
            <b><svg><use href="#i-sketch"/></svg></b><b><svg><use href="#i-extrude"/></svg></b><b><svg><use href="#i-fillet"/></svg></b><b class="faded"><svg><use href="#i-fillet"/></svg></b><b><svg><use href="#i-mirror"/></svg></b><b><svg><use href="#i-sketch"/></svg></b><b><svg><use href="#i-extrude"/></svg></b><b><svg><use href="#i-mirror"/></svg></b><b><svg><use href="#i-combine"/></svg></b><b><svg><use href="#i-combine"/></svg></b><b><svg><use href="#i-copy"/></svg></b><b><svg><use href="#i-combine"/></svg></b><b><svg><use href="#i-copy"/></svg></b><b><svg><use href="#i-copy"/></svg></b><b><svg><use href="#i-copy"/></svg></b><b><svg><use href="#i-plane"/></svg></b>
          </div>
          <div class="run teal">
            <b><svg><use href="#i-offset"/></svg></b><b><svg><use href="#i-offset"/></svg></b><b><svg><use href="#i-offset"/></svg></b><b><svg><use href="#i-offset"/></svg></b><b><svg><use href="#i-offset"/></svg></b>
          </div>
          <div class="run pink">
            <b><svg><use href="#i-sketch"/></svg></b><b><svg><use href="#i-sketch"/></svg></b><b><svg><use href="#i-sketch"/></svg></b><b><svg><use href="#i-boxplus"/></svg></b>
          </div>
          <div class="run rose"><b><svg><use href="#i-extrude"/></svg></b></div>
          <div class="run blue"><b><svg><use href="#i-combine"/></svg></b></div>
          <div class="run red"><b><svg><use href="#i-combine"/></svg></b></div>
          <div class="run mixed"><b><svg><use href="#i-extrude"/></svg></b></div>
          <div class="run orange">
            <b><svg><use href="#i-offset"/></svg></b><b><svg><use href="#i-offset"/></svg></b><b><svg><use href="#i-offset"/></svg></b><b><svg><use href="#i-offset"/></svg></b><b><svg><use href="#i-offset"/></svg></b>
          </div>
          <div class="run pink">
            <b><svg><use href="#i-sketch"/></svg></b><b><svg><use href="#i-align"/></svg></b>
            <svg class="marker" viewBox="0 0 8 24"><path fill="#333" d="M0 0h8v3L5 6v18H3V6L0 3z"/></svg>
          </div>
          <div class="run">
            <b class="faded"><svg><use href="#i-sketch"/></svg></b><b class="faded"><svg><use href="#i-sketch"/></svg></b><b class="faded"><svg><use href="#i-align"/></svg></b>
          </div>
        </div>
        <button class="settings" aria-label="Einstellungen"><svg><use href="#i-gear"/></svg></button>
      </footer>
    </div>
  </body>
</html>
```
FILE: styles.css
```css
* {
  box-sizing: border-box;
}
html {
  background: #4d5563;
}
body {
  margin: 0;
  font-family: Roboto, "Noto Sans", sans-serif;
  font-size: 9px;
  line-height: 12px;
  color: #505050;
}
button {
  display: flex;
  align-items: center;
  justify-content: center;
  padding: 0;
  border: 0;
  background: none;
  font: inherit;
  color: inherit;
}
h1, h2 {
  margin: 0;
  font-size: inherit;
  font-weight: normal;
}
svg {
  flex: none;
}
.sprite {
  position: absolute;
  width: 0;
  height: 0;
}
.icon-12 {
  width: 12px;
  height: 12px;
}
.has-menu::after {
  content: "";
  margin-left: 3px;
  border: solid transparent;
  border-width: 3px 2px 0;
  border-top-color: #777;
}
.window {
  display: flex;
  flex-direction: column;
  height: 100vh;
  border: 1px solid #8d929b;
  border-radius: 5px;
  overflow: hidden;
  background: #fff;
}

/* title bar */
.titlebar {
  display: flex;
  align-items: center;
  height: 21px;
  padding-left: 6px;
  background: #eff3fa;
}
.app-logo {
  width: 10px;
  height: 12px;
}
.window-title {
  margin-left: 3px;
  font-family: "Noto Sans", sans-serif;
  font-size: 8px;
  color: #1c1c1c;
}
.caption-buttons {
  display: flex;
  margin-left: auto;
}
.caption-buttons button {
  width: 33px;
}

/* document tabs */
.tabbar {
  display: flex;
  height: 22px;
  background: #d8d8d8;
}
.quick-access {
  display: flex;
  align-items: center;
  gap: 10px;
  padding: 0 15px 0 4px;
}
.quick-access .dim {
  opacity: 0.7;
}
.doc-tab {
  display: flex;
  flex: 1;
  align-items: center;
  margin-top: 2px;
  padding-right: 2px;
  border-radius: 2px 2px 0 0;
  background: #f4f4f4;
}
.doc-name {
  display: flex;
  flex: 1;
  align-items: center;
  justify-content: center;
  gap: 3px;
  font-family: "Noto Sans", sans-serif;
  font-size: 8px;
  color: #333;
}
.tab-tools {
  display: flex;
  align-items: center;
}
.tab-tools button {
  gap: 3px;
  width: 23px;
}
.tab-tools .wide {
  width: 36px;
}
.avatar {
  width: 18px;
  height: 18px;
}

/* ribbon */
.ribbon {
  display: flex;
  height: 60px;
  padding-left: 8px;
  background: #f4f4f4;
}
.workspace-switch {
  width: 84px;
  height: 44px;
  margin-top: 8px;
  border: 1px solid #c4c4c4;
  border-radius: 3px;
  font-family: "Noto Sans", sans-serif;
  font-size: 8px;
  font-weight: bold;
}
.ribbon-tabs {
  display: flex;
  padding-left: 7px;
}
.ribbon-tabs button {
  height: 18px;
  padding: 0 15px;
  border-bottom: 2px solid transparent;
}
.ribbon-tabs .active {
  padding: 0 9px;
  margin-right: 5px;
  border-color: #333;
}
.ribbon-groups {
  display: flex;
  padding-left: 2px;
}
.group {
  display: flex;
  flex-direction: column;
  align-items: center;
  height: 37px;
  padding: 0 2px;
  border-left: 1px solid #d0d0d0;
}
.group:first-child {
  padding: 0;
  border: 0;
}
.tools {
  display: flex;
  height: 27px;
}
.tools button {
  width: 31px;
  height: 27px;
}
.tools svg {
  width: 23px;
  height: 23px;
}
.tools .selected {
  width: 28px;
  border: 1px solid #a5d3ea;
  background: #ddeff8;
}
.fx {
  font: italic 24px/24px "Liberation Serif", serif;
}
.group-label {
  padding: 0 7px;
}

/* canvas */
.workspace {
  position: relative;
  flex: 1;
  min-height: 0;
}
.viewport {
  display: block;
  width: 100%;
  height: 100%;
}
.viewcube text {
  font-size: 9px;
}
.viewcube .cube-face {
  font-size: 6px;
  fill: #777;
}
.viewcube .cube-side {
  font-size: 5px;
  fill: #888;
}
.panel-header {
  display: flex;
  align-items: center;
  height: 18px;
  padding: 0 5px 0 2px;
  border: 1px solid #dcdcdc;
  background: #f4f4f4;
}
.panel-header h2 {
  flex: 1;
  padding-left: 5px;
}
.browser {
  position: absolute;
  top: 4px;
  left: 2px;
  width: 213px;
}
.tree {
  margin: 2px 0 0;
  padding: 0;
  list-style: none;
}
.tree li {
  display: flex;
  align-items: center;
  height: 17px;
}
.level-0 {
  padding-left: 8px;
}
.level-1 {
  padding-left: 21px;
}
.level-2 {
  padding-left: 52px;
}
.twisty {
  width: 16px;
  margin-right: 2px;
}
.chip {
  display: flex;
  align-items: center;
  height: 15px;
  background: #f4f4f4;
}
.chip svg {
  width: 14px;
  height: 12px;
}
.node {
  display: flex;
  align-items: center;
  gap: 9px;
  height: 15px;
  margin-left: 3px;
  padding: 0 7px 0 1px;
}
.flush {
  margin-left: 0;
  padding-left: 0;
}
.root {
  padding-right: 9px;
  background: #d9d9d9;
  font-family: "Noto Sans", sans-serif;
  font-size: 8px;
  font-weight: bold;
  color: #404040;
}
.current {
  background: #dceef8;
  box-shadow: 0 0 0 1px #5bb0dc;
}
.chip input {
  width: 9px;
  height: 9px;
  margin: 0 4px;
  accent-color: #4a5568;
}
.mark {
  width: 4px;
  height: 15px;
}
.comments {
  position: absolute;
  bottom: 3px;
  left: 2px;
  width: 213px;
}
.comments h2 {
  padding-left: 17px;
}
.navbar {
  position: absolute;
  bottom: 5px;
  left: 50%;
  display: flex;
  align-items: center;
  gap: 5px;
  height: 17px;
  padding: 0 2px;
  background: #f4f4f4;
  transform: translateX(-50%);
}
.assistant {
  position: absolute;
  right: 8px;
  bottom: 5px;
}

/* timeline */
.timeline {
  display: flex;
  height: 35px;
  padding-left: 2px;
  background: #f2f2f2;
}
.player {
  display: flex;
  align-items: center;
  margin-right: 10px;
}
.player button {
  width: 18px;
}
.track {
  position: relative;
  display: flex;
  height: 24px;
  margin-top: 5px;
}
.track::after {
  content: "";
  position: absolute;
  right: 8px;
  bottom: 0;
  left: 8px;
  border-bottom: 1px solid #bbb;
}
.run {
  position: relative;
  display: flex;
}
.run::before {
  content: "";
  position: absolute;
  top: 0;
  left: 0;
  right: 3px;
  height: 5px;
  background: inherit;
}
.run b {
  display: flex;
  flex-direction: column;
  align-items: center;
  justify-content: space-between;
  width: 17px;
  padding-top: 5px;
  background: #f2f2f2;
}
.run b::after {
  content: "";
  width: 1px;
  height: 4px;
  background: #aaa;
}
.run svg {
  width: 13px;
  height: 13px;
}
.run .faded svg {
  opacity: 0.3;
}
.run .marker {
  position: absolute;
  top: 2px;
  right: -3px;
  width: 8px;
  height: 22px;
}
.settings {
  margin-left: auto;
  margin-right: 7px;
}
.settings svg {
  width: 14px;
  height: 14px;
}
.pink {
  background: #e08fe6;
}
.teal {
  background: #6ff5d8;
}
.rose {
  background: #ffb0b4;
}
.blue {
  background: #5f8bea;
}
.red {
  background: #ff6675;
}
.orange {
  background: #ff9f6b;
}
.mixed {
  background: linear-gradient(to right, #ff9f6b 40%, #6ff5d8 40%);
}
```
